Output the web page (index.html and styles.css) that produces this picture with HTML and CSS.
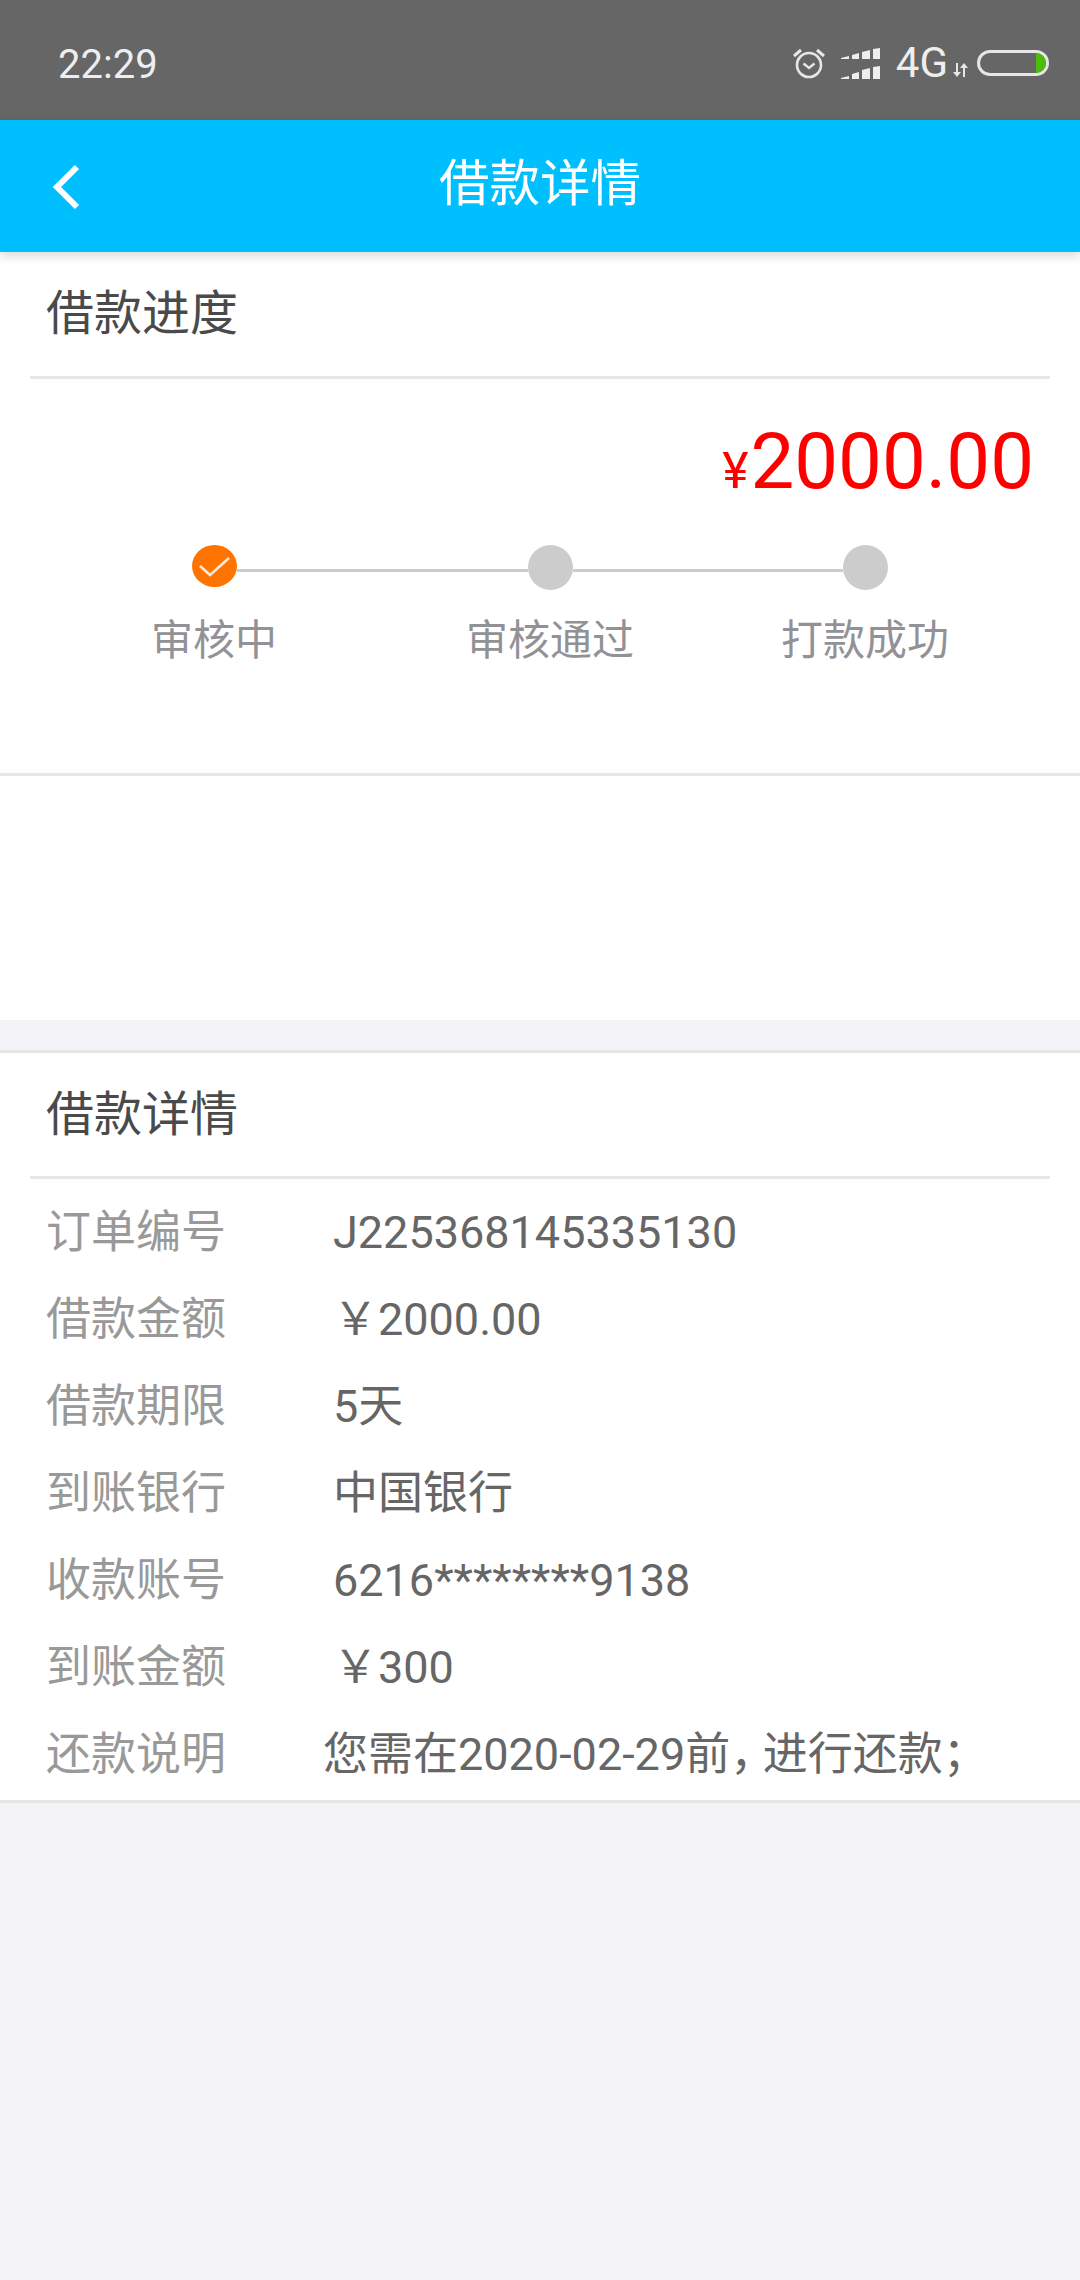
FILE: index.html
```html
<!DOCTYPE html>
<html lang="zh-CN">
<head>
    <meta charset="UTF-8">
    <title>借款详情</title>
    <link rel="stylesheet" href="styles.css">
</head>
<body>
    <div class="status-bar">
        <span class="time">22:29</span>
        <div class="status-icons">
            <svg class="alarm" width="32" height="31" viewBox="0 0 32 31">
                <circle cx="16" cy="17" r="12" fill="none" stroke="#e6e6e6" stroke-width="2.6"/>
                <path d="M10.500 15.500 L16 20 L21.500 15.500" fill="none" stroke="#e6e6e6" stroke-width="2.400"/>
                <path d="M1 8 L8 2 M31 8 L24 2" fill="none" stroke="#e6e6e6" stroke-width="3"/>
            </svg>
            <svg class="signal" width="40" height="31" viewBox="0 0 40 31">
                <path d="M0 10l8-2v3H0zM11 11V7l7-2v6zM21 11V4l8-2v9zM32 11V1l7-1v11z" fill="#eee"/>
                <path d="M0 30l8-2v3H0zM11 31v-5l7-2v7zM21 31v-9l8-2v11zM32 31V19l7-1v13z" fill="#eee"/>
            </svg>
            <span class="net">4G</span>
            <svg class="arrows" width="15" height="14" viewBox="0 0 15 14">
                <path d="M3 0h2v9h3l-4 5-4-5h3zM10 14h2V5h3l-4-5-4 5h3z" fill="#e6e6e6"/>
            </svg>
            <div class="battery"><div class="battery-level"></div></div>
        </div>
    </div>

    <div class="nav-bar">
        <svg class="back" width="30" height="46" viewBox="0 0 30 46">
            <path d="M27 3 L7 23 L27 43" fill="none" stroke="#fff" stroke-width="6"/>
        </svg>
        <h1>借款详情</h1>
    </div>

    <div class="card progress-card">
        <h2 class="card-title">借款进度</h2>
        <div class="amount"><span class="yen">¥</span>2000.00</div>
        <div class="step-track">
            <div class="dot dot-active">
                <svg width="33" height="21" viewBox="0 0 33 21">
                    <path d="M2 10 L12 19 L31 2" fill="none" stroke="#ffe8d6" stroke-width="2.600"/>
                </svg>
            </div>
            <div class="line line-first"></div>
            <div class="dot"></div>
            <div class="line line-second"></div>
            <div class="dot"></div>
        </div>
        <div class="step-labels">
            <span>审核中</span>
            <span>审核通过</span>
            <span>打款成功</span>
        </div>
    </div>

    <div class="blank"></div>

    <div class="card detail-card">
        <h2 class="card-title">借款详情</h2>
        <div class="rows">
            <div class="row"><span class="label">订单编号</span><span class="value">J225368145335130</span></div>
            <div class="row"><span class="label">借款金额</span><span class="value">￥2000.00</span></div>
            <div class="row"><span class="label">借款期限</span><span class="value">5天</span></div>
            <div class="row"><span class="label">到账银行</span><span class="value">中国银行</span></div>
            <div class="row"><span class="label">收款账号</span><span class="value">6216********9138</span></div>
            <div class="row"><span class="label">到账金额</span><span class="value">￥300</span></div>
            <div class="row"><span class="label">还款说明</span><span class="value value-note">您需在2020-02-29前<span class="comma">，</span>进行还款；</span></div>
        </div>
    </div>
</body>
</html>
```

FILE: styles.css
```css
* {
    box-sizing: border-box;
}
body {
    margin: 0;
    height: 2280px;
    background: #f3f3f8;
    font-family: Roboto, "Noto Sans CJK SC", sans-serif;
    overflow: hidden;
}
.status-bar {
    height: 120px;
    background: #666;
    display: flex;
    justify-content: space-between;
    align-items: center;
    padding: 6px 31px 0 58px;
    color: #eee;
}
.time {
    margin-top: 2px;
    font-size: 40px;
}
.status-icons {
    display: flex;
    align-items: center;
}
.signal {
    margin-left: 16px;
}
.net {
    margin-left: 15px;
    font-size: 42px;
    line-height: 40px;
}
.arrows {
    margin: 14px 0 0 5px;
}
.battery {
    width: 72px;
    height: 26px;
    margin-left: 9px;
    border: 3px solid #e6e6e6;
    border-radius: 13px;
    overflow: hidden;
    display: flex;
    justify-content: flex-end;
}
.battery-level {
    width: 10px;
    background: #4cbb0a;
}
.nav-bar {
    height: 132px;
    background: #00bfff;
    display: flex;
    align-items: center;
    justify-content: center;
    position: relative;
    box-shadow: 0 4px 10px rgba(0, 0, 0, 0.15);
}
.nav-bar h1 {
    margin: 0 0 14px;
    font-size: 50.5px;
    font-weight: 400;
    color: #fff;
}
.back {
    position: absolute;
    left: 50px;
    top: 44px;
}
.card {
    background: #fff;
}
.card-title {
    margin: 0 30px;
    font-size: 48px;
    font-weight: 400;
    line-height: 124px;
    color: #4a4a4a;
    padding-left: 16px;
    border-bottom: 3px solid #e6e6e6;
}
.progress-card {
    height: 524px;
    border-bottom: 3px solid #e6e6e6;
}
.progress-card .card-title {
    height: 127px;
}
.amount {
    margin-top: 39px;
    padding-right: 46px;
    text-align: right;
    font-size: 78px;
    line-height: 88px;
    color: #f00;
}
.yen {
    font-size: 50px;
    margin-right: 2px;
}
.step-track {
    display: flex;
    align-items: flex-start;
    margin: 30px 0 0 192px;
}
.dot {
    width: 45px;
    height: 45px;
    border-radius: 50%;
    background: #ccc;
    flex-shrink: 0;
}
.dot-active {
    height: 42px;
    background: #ff7300;
    display: flex;
    align-items: center;
    justify-content: center;
}
.line {
    height: 3px;
    margin-top: 24px;
    background: #ccc;
}
.line-first {
    width: 291px;
}
.line-second {
    width: 270px;
}
.step-labels {
    display: grid;
    grid-template-columns: 336px 336px 294px;
    margin: 26px 0 0 46px;
    text-align: center;
    font-size: 42px;
    line-height: 50px;
    color: #929296;
}
.blank {
    height: 244px;
    background: #fff;
}
.detail-card {
    margin-top: 30px;
    height: 753px;
    border-top: 3px solid #e6e6e6;
    border-bottom: 3px solid #e6e6e6;
}
.detail-card .card-title {
    height: 126px;
}
.rows {
    padding-top: 11px;
}
.row {
    display: flex;
    height: 87px;
    font-size: 45px;
    line-height: 85px;
    padding-left: 46px;
}
.label {
    width: 287px;
    color: #999;
}
.value {
    color: #666;
}
.value-note {
    margin-left: -10px;
}
.comma {
    font-feature-settings: "halt";
    margin-right: 10px;
}
```
